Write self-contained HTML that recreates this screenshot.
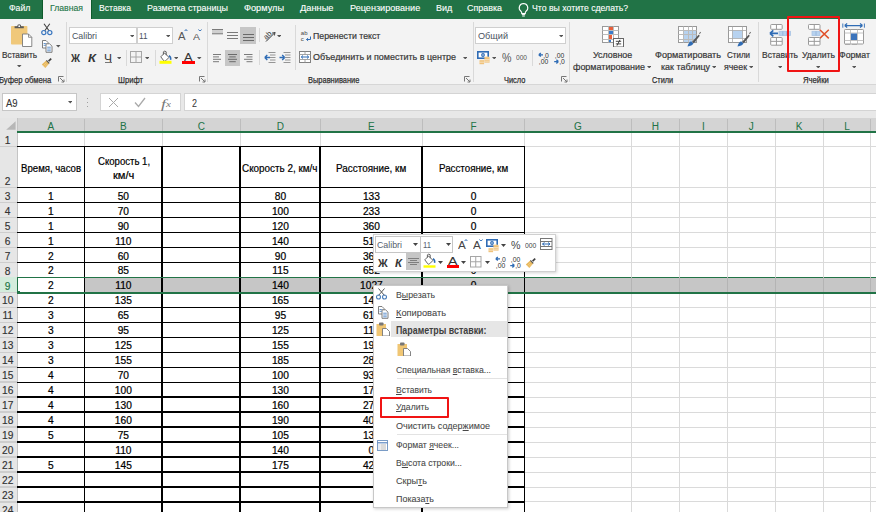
<!DOCTYPE html>
<html><head><meta charset="utf-8"><title>Excel</title>
<style>
html,body{margin:0;padding:0;}
body{width:876px;height:512px;overflow:hidden;position:relative;background:#fff;font-family:"Liberation Sans",sans-serif;}
.a{position:absolute;}
.t{position:absolute;white-space:nowrap;}
</style></head><body>
<div class="a" style="left:0px;top:0px;width:876px;height:19px;background:#217346;"></div>
<div class="a" style="left:42.9px;top:0px;width:48.3px;height:19px;background:#f3f3f3;"></div>
<div class="a" style="left:42.4px;top:0px;width:0.6px;height:18.8px;background:#0e5a2c;"></div>
<div class="a" style="left:91.2px;top:0px;width:0.6px;height:18.8px;background:#0e5a2c;"></div>
<span class="t" id="t1" style="top:4.28px;font-size:9.3px;line-height:9.3px;color:#fff;-webkit-text-stroke:0.12px currentColor;left:8.6px;transform:scaleX(0.9362);transform-origin:0 50%;">Файл</span>
<span class="t" id="t2" style="top:4.28px;font-size:9.3px;line-height:9.3px;color:#fff;-webkit-text-stroke:0.12px currentColor;left:99px;transform:scaleX(0.9259);transform-origin:0 50%;">Вставка</span>
<span class="t" id="t3" style="top:4.28px;font-size:9.3px;line-height:9.3px;color:#fff;-webkit-text-stroke:0.12px currentColor;left:147px;transform:scaleX(0.9604);transform-origin:0 50%;">Разметка страницы</span>
<span class="t" id="t4" style="top:4.28px;font-size:9.3px;line-height:9.3px;color:#fff;-webkit-text-stroke:0.12px currentColor;left:244px;transform:scaleX(0.9884);transform-origin:0 50%;">Формулы</span>
<span class="t" id="t5" style="top:4.28px;font-size:9.3px;line-height:9.3px;color:#fff;-webkit-text-stroke:0.12px currentColor;left:299.5px;transform:scaleX(0.9972);transform-origin:0 50%;">Данные</span>
<span class="t" id="t6" style="top:4.28px;font-size:9.3px;line-height:9.3px;color:#fff;-webkit-text-stroke:0.12px currentColor;left:349.5px;transform:scaleX(0.9778);transform-origin:0 50%;">Рецензирование</span>
<span class="t" id="t7" style="top:4.28px;font-size:9.3px;line-height:9.3px;color:#fff;-webkit-text-stroke:0.12px currentColor;left:435.8px;transform:scaleX(0.9627);transform-origin:0 50%;">Вид</span>
<span class="t" id="t8" style="top:4.28px;font-size:9.3px;line-height:9.3px;color:#fff;-webkit-text-stroke:0.12px currentColor;left:467px;transform:scaleX(0.9593);transform-origin:0 50%;">Справка</span>
<span class="t" id="t9" style="top:4.28px;font-size:9.3px;line-height:9.3px;color:#fff;-webkit-text-stroke:0.12px currentColor;left:531.5px;transform:scaleX(0.9360);transform-origin:0 50%;">Что вы хотите сделать?</span>
<span class="t" id="t10" style="top:4.28px;font-size:9.3px;line-height:9.3px;color:#217346;-webkit-text-stroke:0.12px currentColor;left:50px;transform:scaleX(0.9325);transform-origin:0 50%;">Главная</span>
<svg class="a" style="left:517px;top:2px;width:13px;height:15px;" width="13" height="15" viewBox="0 0 13 15"><path d="M6.5 1.5a4.3 4.3 0 0 0-2.6 7.7c.5.4.8 1 .8 1.6v.7h3.6v-.7c0-.6.3-1.2.8-1.6A4.3 4.3 0 0 0 6.5 1.5z" fill="none" stroke="#fff" stroke-width="1.1"/><path d="M4.8 12.6h3.4M5.2 14h2.6" stroke="#fff" stroke-width="1"/></svg>
<div class="a" style="left:0px;top:19px;width:876px;height:65px;background:#f3f3f3;"></div>
<div class="a" style="left:0px;top:84px;width:876px;height:1px;background:#d6d6d6;"></div>
<div class="a" style="left:66px;top:22px;width:1px;height:60px;background:#d9d9d9;"></div>
<div class="a" style="left:206.5px;top:22px;width:1px;height:60px;background:#d9d9d9;"></div>
<div class="a" style="left:472.8px;top:22px;width:1px;height:60px;background:#d9d9d9;"></div>
<div class="a" style="left:568.8px;top:22px;width:1px;height:60px;background:#d9d9d9;"></div>
<div class="a" style="left:757.5px;top:22px;width:1px;height:60px;background:#d9d9d9;"></div>
<span class="t" id="t11" style="top:75.9px;font-size:9px;line-height:9px;color:#2e2e2e;-webkit-text-stroke:0.25px currentColor;left:-1.2px;transform:scaleX(0.8536);transform-origin:0 50%;">Буфер обмена</span>
<span class="t" id="t12" style="top:75.9px;font-size:9px;line-height:9px;color:#2e2e2e;-webkit-text-stroke:0.25px currentColor;left:118px;transform:scaleX(0.8439);transform-origin:0 50%;">Шрифт</span>
<span class="t" id="t13" style="top:75.9px;font-size:9px;line-height:9px;color:#2e2e2e;-webkit-text-stroke:0.25px currentColor;left:307.6px;transform:scaleX(0.8297);transform-origin:0 50%;">Выравнивание</span>
<span class="t" id="t14" style="top:75.9px;font-size:9px;line-height:9px;color:#2e2e2e;-webkit-text-stroke:0.25px currentColor;left:503.6px;transform:scaleX(0.8266);transform-origin:0 50%;">Число</span>
<span class="t" id="t15" style="top:75.9px;font-size:9px;line-height:9px;color:#2e2e2e;-webkit-text-stroke:0.25px currentColor;left:652.4px;transform:scaleX(0.8135);transform-origin:0 50%;">Стили</span>
<span class="t" id="t16" style="top:75.9px;font-size:9px;line-height:9px;color:#2e2e2e;-webkit-text-stroke:0.25px currentColor;left:803px;transform:scaleX(0.8547);transform-origin:0 50%;">Ячейки</span>
<svg class="a" style="left:58px;top:76px;width:7px;height:7px;" width="7" height="7" viewBox="0 0 7 7"><path d="M0.5 0.5h5M0.5 0.5v5" stroke="#777" stroke-width="1" fill="none"/><path d="M2 2l4 4M6 3.5V6H3.5" stroke="#777" stroke-width="1" fill="none"/></svg>
<svg class="a" style="left:199px;top:76px;width:7px;height:7px;" width="7" height="7" viewBox="0 0 7 7"><path d="M0.5 0.5h5M0.5 0.5v5" stroke="#777" stroke-width="1" fill="none"/><path d="M2 2l4 4M6 3.5V6H3.5" stroke="#777" stroke-width="1" fill="none"/></svg>
<svg class="a" style="left:464px;top:76px;width:7px;height:7px;" width="7" height="7" viewBox="0 0 7 7"><path d="M0.5 0.5h5M0.5 0.5v5" stroke="#777" stroke-width="1" fill="none"/><path d="M2 2l4 4M6 3.5V6H3.5" stroke="#777" stroke-width="1" fill="none"/></svg>
<svg class="a" style="left:561px;top:76px;width:7px;height:7px;" width="7" height="7" viewBox="0 0 7 7"><path d="M0.5 0.5h5M0.5 0.5v5" stroke="#777" stroke-width="1" fill="none"/><path d="M2 2l4 4M6 3.5V6H3.5" stroke="#777" stroke-width="1" fill="none"/></svg>
<svg class="a" style="left:10px;top:23px;width:23px;height:25px;" width="23" height="25" viewBox="0 0 23 25"><rect x="1" y="3" width="16.4" height="18.6" rx="0.8" fill="#f0c87a"/><path d="M4.6 5.2V3.2h2.6a2 2 0 0 1 4 0h2.6v2z" fill="#595959"/><circle cx="9.2" cy="3.2" r="0.9" fill="#fff"/><path d="M12.5 11h6l3.3 3.3v9.2h-9.3z" fill="#fff" stroke="#7a7a7a" stroke-width="0.9"/><path d="M18.5 11v3.3h3.3" fill="none" stroke="#7a7a7a" stroke-width="0.8"/></svg>
<span class="t" id="t17" style="top:51.32px;font-size:9.2px;line-height:9.2px;color:#363636;-webkit-text-stroke:0.2px currentColor;left:1.7px;transform:scaleX(0.8985);transform-origin:0 50%;">Вставить</span>
<svg class="a" style="left:17.25px;top:64.8px;width:4.5px;height:2.5px;" width="4.5" height="2.5" viewBox="0 0 4.5 2.5"><path d="M0 0h4.5L2.25 2.5z" fill="#555"/></svg>
<svg class="a" style="left:40px;top:23px;width:14px;height:13px;" width="14" height="13" viewBox="0 0 14 13"><path d="M4 0.8l5.2 7.2M9.8 0.8L4.6 8" stroke="#404040" stroke-width="1.1"/><circle cx="3.8" cy="9.6" r="2.1" fill="none" stroke="#3a77c0" stroke-width="1.2"/><circle cx="9.8" cy="9.6" r="2.1" fill="none" stroke="#3a77c0" stroke-width="1.2"/></svg>
<svg class="a" style="left:41px;top:39px;width:12px;height:14px;" width="12" height="14" viewBox="0 0 12 14"><path d="M1.5 1.5h3.5l2 2v5.5H1.5z" fill="#fff" stroke="#707070" stroke-width="0.9"/><path d="M5 4.8h3.6l2.4 2.4v6.1H5z" fill="#fff" stroke="#707070" stroke-width="0.9"/><path d="M2.6 4.5h2.2M2.6 6.3h2.2M6.2 8.2h3.6M6.2 10h3.6M6.2 11.8h3.6" stroke="#3a77c0" stroke-width="0.8"/></svg>
<svg class="a" style="left:56.25px;top:45.3px;width:4.5px;height:2.5px;" width="4.5" height="2.5" viewBox="0 0 4.5 2.5"><path d="M0 0h4.5L2.25 2.5z" fill="#555"/></svg>
<svg class="a" style="left:41px;top:57px;width:12px;height:11px;" width="12" height="11" viewBox="0 0 12 11"><path d="M0.8 7.4l4.4-3.9 3 3-3.9 4.4z" fill="#e8b85c"/><path d="M2.4 8.6l3.2-3M3.8 9.6l2.6-2.6" stroke="#f6dca8" stroke-width="0.5"/><path d="M5.4 3.4l2.9 2.9" stroke="#555" stroke-width="1.2"/><path d="M7 3.6l2.6-2.6 1.2 1.2-2.6 2.6z" fill="#404040"/></svg>
<div class="a" style="left:69px;top:27px;width:67.5px;height:16.8px;background:#fff;box-sizing:border-box;border:1px solid #cfcfcf;"></div>
<span class="t" id="t18" style="top:30.96px;font-size:9.6px;line-height:9.6px;color:#4a5260;left:71.5px;transform:scaleX(0.9190);transform-origin:0 50%;">Calibri</span>
<svg class="a" style="left:129.75px;top:34.8px;width:4.5px;height:2.5px;" width="4.5" height="2.5" viewBox="0 0 4.5 2.5"><path d="M0 0h4.5L2.25 2.5z" fill="#555"/></svg>
<div class="a" style="left:136.5px;top:27px;width:36px;height:16.8px;background:#fff;box-sizing:border-box;border:1px solid #cfcfcf;"></div>
<span class="t" id="t19" style="top:30.96px;font-size:9.6px;line-height:9.6px;color:#4a5260;left:139px;transform:scaleX(0.8527);transform-origin:0 50%;">11</span>
<svg class="a" style="left:165.75px;top:34.8px;width:4.5px;height:2.5px;" width="4.5" height="2.5" viewBox="0 0 4.5 2.5"><path d="M0 0h4.5L2.25 2.5z" fill="#555"/></svg>
<span class="t" id="t20" style="top:32px;font-size:10px;line-height:10px;color:#555;left:177.5px;transform:scaleX(1.1241);transform-origin:0 50%;">A</span>
<svg class="a" style="left:183.5px;top:28.5px;width:4px;height:2.5px;" width="4" height="2.5" viewBox="0 0 4 2.5"><path d="M0.5 2.2L2 0.5 3.5 2.2" stroke="#2f6cb5" stroke-width="1" fill="none"/></svg>
<span class="t" id="t21" style="top:32.9px;font-size:9px;line-height:9px;color:#555;left:192.5px;transform:scaleX(1.1636);transform-origin:0 50%;">A</span>
<svg class="a" style="left:197.5px;top:28.5px;width:4px;height:2.5px;" width="4" height="2.5" viewBox="0 0 4 2.5"><path d="M0.5 0.5L2 2.2 3.5 0.5" stroke="#2f6cb5" stroke-width="1" fill="none"/></svg>
<span class="t" id="t22" style="top:53.1px;font-size:11px;line-height:11px;color:#363636;font-weight:700;left:71px;transform:scaleX(0.9042);transform-origin:0 50%;">Ж</span>
<span class="t" id="t23" style="top:53.1px;font-size:11px;line-height:11px;color:#363636;font-weight:700;left:88px;transform:scaleX(1.1824);transform-origin:0 50%;font-style:italic;">К</span>
<span class="t" id="t24" style="top:53.3px;font-size:10.5px;line-height:10.5px;color:#363636;left:104px;transform:scaleX(1.1429);transform-origin:0 50%;">Ч</span>
<div class="a" style="left:104.5px;top:62px;width:7px;height:1px;background:#777;"></div>
<svg class="a" style="left:116.75px;top:56.8px;width:4.5px;height:2.5px;" width="4.5" height="2.5" viewBox="0 0 4.5 2.5"><path d="M0 0h4.5L2.25 2.5z" fill="#555"/></svg>
<div class="a" style="left:126px;top:50px;width:1px;height:16px;background:#d9d9d9;"></div>
<svg class="a" style="left:130px;top:51px;width:12px;height:12px;" width="12" height="12" viewBox="0 0 12 12"><rect x="0.5" y="0.5" width="11" height="11" fill="none" stroke="#a6a6a6"/><path d="M6 0.5v11M0.5 6h11" stroke="#a6a6a6"/></svg>
<svg class="a" style="left:144.75px;top:56.8px;width:4.5px;height:2.5px;" width="4.5" height="2.5" viewBox="0 0 4.5 2.5"><path d="M0 0h4.5L2.25 2.5z" fill="#555"/></svg>
<div class="a" style="left:155px;top:50px;width:1px;height:16px;background:#d9d9d9;"></div>
<svg class="a" style="left:158.5px;top:49.5px;width:14px;height:15px;" width="14" height="15" viewBox="0 0 14 15"><path d="M1.8 6.8L5.6 3l4.4 4.4-3.4 3.4q-0.9 0.9-1.8 0z" fill="#fff" stroke="#555" stroke-width="0.9"/><path d="M4.4 4.4V1.8q1.4-1.4 2.8 0v3.4" fill="none" stroke="#555" stroke-width="0.9"/><path d="M10 5.6q2.2 1.4 1.6 4.2" stroke="#2f6cb5" stroke-width="1.5" fill="none"/><rect x="0.5" y="10.8" width="12" height="3" fill="#ffff00"/></svg>
<svg class="a" style="left:173.75px;top:56.8px;width:4.5px;height:2.5px;" width="4.5" height="2.5" viewBox="0 0 4.5 2.5"><path d="M0 0h4.5L2.25 2.5z" fill="#555"/></svg>
<span class="t" id="t25" style="top:51.6px;font-size:10.5px;line-height:10.5px;color:#333;left:184px;transform:scaleX(1.2116);transform-origin:0 50%;">A</span>
<div class="a" style="left:182px;top:60.5px;width:12.5px;height:3px;background:#ff0000;"></div>
<svg class="a" style="left:197.25px;top:56.8px;width:4.5px;height:2.5px;" width="4.5" height="2.5" viewBox="0 0 4.5 2.5"><path d="M0 0h4.5L2.25 2.5z" fill="#555"/></svg>
<svg class="a" style="left:211.5px;top:29px;width:11px;height:6px;" width="11" height="6" viewBox="0 0 11 6"><rect x="0" y="0.5" width="11" height="4.5" fill="#d0d0d0"/><rect x="0" y="0" width="11" height="1" fill="#7a7a7a"/><rect x="0" y="4.3" width="11" height="1" fill="#7a7a7a"/></svg>
<svg class="a" style="left:227px;top:31.8px;width:11px;height:10px;" width="11" height="10" viewBox="0 0 11 10"><rect x="0" y="0" width="11" height="1" fill="#7a7a7a"/><rect x="0" y="3" width="11" height="1" fill="#7a7a7a"/><rect x="0" y="6" width="11" height="1" fill="#7a7a7a"/></svg>
<div class="a" style="left:240.4px;top:27.3px;width:15.8px;height:16.5px;background:#c6c6c6;"></div>
<svg class="a" style="left:243px;top:33.5px;width:11px;height:10px;" width="11" height="10" viewBox="0 0 11 10"><rect x="0" y="0" width="11" height="1" fill="#6a6a6a"/><rect x="0" y="3" width="11" height="1" fill="#6a6a6a"/><rect x="0" y="6" width="11" height="1" fill="#6a6a6a"/></svg>
<svg class="a" style="left:262px;top:29px;width:14px;height:13px;" width="14" height="13" viewBox="0 0 14 13"><text x="1" y="9" font-size="7.5" font-family="Liberation Sans" fill="#333" transform="rotate(-45 5 6)">ab</text><path d="M4 12.5l9-9" stroke="#333" stroke-width="1"/><path d="M13 3.5l-3 0.6M13 3.5l-0.6 3" stroke="#333" stroke-width="0.9"/></svg>
<svg class="a" style="left:276.75px;top:34.8px;width:4.5px;height:2.5px;" width="4.5" height="2.5" viewBox="0 0 4.5 2.5"><path d="M0 0h4.5L2.25 2.5z" fill="#555"/></svg>
<svg class="a" style="left:212.7px;top:53.8px;width:8.5px;height:10.6px;" width="8.5" height="10.6" viewBox="0 0 8.5 10.6"><rect x="0" y="0" width="8.5" height="1" fill="#7a7a7a"/><rect x="0" y="2.4" width="6" height="1" fill="#7a7a7a"/><rect x="0" y="4.8" width="8.5" height="1" fill="#7a7a7a"/><rect x="0" y="7.2" width="6" height="1" fill="#7a7a7a"/></svg>
<div class="a" style="left:225px;top:49.5px;width:15.2px;height:16.2px;background:#c6c6c6;"></div>
<svg class="a" style="left:228px;top:53.8px;width:9px;height:10.6px;" width="9" height="10.6" viewBox="0 0 9 10.6"><rect x="0" y="0" width="9" height="1" fill="#6a6a6a"/><rect x="1.25" y="2.4" width="6.5" height="1" fill="#6a6a6a"/><rect x="0" y="4.8" width="9" height="1" fill="#6a6a6a"/><rect x="1.25" y="7.2" width="6.5" height="1" fill="#6a6a6a"/></svg>
<svg class="a" style="left:244px;top:53.8px;width:8.5px;height:10.6px;" width="8.5" height="10.6" viewBox="0 0 8.5 10.6"><rect x="0" y="0" width="8.5" height="1" fill="#7a7a7a"/><rect x="2.5" y="2.4" width="6" height="1" fill="#7a7a7a"/><rect x="0" y="4.8" width="8.5" height="1" fill="#7a7a7a"/><rect x="2.5" y="7.2" width="6" height="1" fill="#7a7a7a"/></svg>
<div class="a" style="left:258.6px;top:50px;width:1px;height:15px;background:#d9d9d9;"></div>
<div class="a" style="left:258.6px;top:28px;width:1px;height:14px;background:#d9d9d9;"></div>
<svg class="a" style="left:263.5px;top:51.5px;width:12px;height:12px;" width="12" height="12" viewBox="0 0 12 12"><path d="M4.5 0.5h7M6 3h5.5M6 5.5h5.5M6 8h5.5M4.5 10.5h7" stroke="#8a8a8a" stroke-width="0.9"/><path d="M0.8 5.5h5.2M0.8 5.5l2.5-2.5M0.8 5.5l2.5 2.5" stroke="#2f6cb5" stroke-width="1.4" fill="none"/></svg>
<svg class="a" style="left:279px;top:51.5px;width:12px;height:12px;" width="12" height="12" viewBox="0 0 12 12"><path d="M4.5 0.5h7M6 3h5.5M6 5.5h5.5M6 8h5.5M4.5 10.5h7" stroke="#8a8a8a" stroke-width="0.9"/><path d="M0.5 5.5h5.2M5.7 5.5l-2.5-2.5M5.7 5.5l-2.5 2.5" stroke="#2f6cb5" stroke-width="1.4" fill="none"/></svg>
<div class="a" style="left:295px;top:25px;width:1px;height:45px;background:#d9d9d9;"></div>
<svg class="a" style="left:299.5px;top:30px;width:13px;height:12px;" width="13" height="12" viewBox="0 0 13 12"><text x="0.8" y="5.4" font-size="6" font-family="Liberation Sans" fill="#444">ab</text><text x="0.8" y="10.6" font-size="6" font-family="Liberation Sans" fill="#444">c</text><path d="M10.5 6.5v3H6.5M6.5 9.5l1.6-1.3M6.5 9.5l1.6 1.3" stroke="#2f6cb5" stroke-width="1" fill="none"/></svg>
<span class="t" id="t26" style="top:31.82px;font-size:9.2px;line-height:9.2px;color:#363636;-webkit-text-stroke:0.2px currentColor;left:313.4px;transform:scaleX(0.9512);transform-origin:0 50%;">Перенести текст</span>
<svg class="a" style="left:299px;top:51px;width:12px;height:12px;" width="12" height="12" viewBox="0 0 12 12"><rect x="0.5" y="0.5" width="11" height="11" fill="#fff" stroke="#808080"/><path d="M0.5 3.5h11M0.5 8.5h11M6 0.5v3M6 8.5v3" stroke="#9a9a9a" stroke-width="0.9"/><rect x="1" y="4" width="10" height="4" fill="#fff"/><path d="M2.3 6h7.4M2.3 6l1.7-1.5M2.3 6l1.7 1.5M9.7 6l-1.7-1.5M9.7 6l-1.7 1.5" stroke="#2f6cb5" stroke-width="1" fill="none"/></svg>
<span class="t" id="t27" style="top:53.32px;font-size:9.2px;line-height:9.2px;color:#363636;-webkit-text-stroke:0.2px currentColor;left:313.4px;transform:scaleX(0.9735);transform-origin:0 50%;">Объединить и поместить в центре</span>
<svg class="a" style="left:462.75px;top:56.8px;width:4.5px;height:2.5px;" width="4.5" height="2.5" viewBox="0 0 4.5 2.5"><path d="M0 0h4.5L2.25 2.5z" fill="#555"/></svg>
<div class="a" style="left:475.3px;top:27px;width:91px;height:16.8px;background:#fff;box-sizing:border-box;border:1px solid #cfcfcf;"></div>
<span class="t" id="t28" style="top:30.96px;font-size:9.6px;line-height:9.6px;color:#4a5260;left:477.5px;transform:scaleX(0.9500);transform-origin:0 50%;">Общий</span>
<svg class="a" style="left:558.75px;top:34.8px;width:4.5px;height:2.5px;" width="4.5" height="2.5" viewBox="0 0 4.5 2.5"><path d="M0 0h4.5L2.25 2.5z" fill="#555"/></svg>
<svg class="a" style="left:476.5px;top:51px;width:14px;height:14px;" width="14" height="14" viewBox="0 0 14 14"><rect x="0.8" y="0.8" width="10.4" height="6.4" fill="#fff" stroke="#2f6cb5" stroke-width="1.6"/><circle cx="6" cy="4" r="1.9" fill="#2f6cb5"/><path d="M5 4h2" stroke="#fff" stroke-width="0.7"/><ellipse cx="10" cy="6.6" rx="2.6" ry="1" fill="#f5cf8f"/><rect x="7.4" y="6.6" width="5.2" height="5" fill="#f0c27a"/><path d="M7.4 8.6h5.2M7.4 10.2h5.2" stroke="#fff" stroke-width="0.5"/><rect x="2.5" y="9.2" width="4.6" height="4" fill="#f0c27a"/><path d="M2.5 11.2h4.6" stroke="#fff" stroke-width="0.5"/></svg>
<svg class="a" style="left:491.75px;top:56.8px;width:4.5px;height:2.5px;" width="4.5" height="2.5" viewBox="0 0 4.5 2.5"><path d="M0 0h4.5L2.25 2.5z" fill="#555"/></svg>
<span class="t" id="t29" style="top:52.4px;font-size:12px;line-height:12px;color:#555;left:502px;transform:scaleX(0.8902);transform-origin:0 50%;">%</span>
<span class="t" id="t30" style="top:54px;font-size:8px;line-height:8px;color:#555;left:516px;transform:scaleX(0.8234);transform-origin:0 50%;">000</span>
<div class="a" style="left:532px;top:50px;width:1px;height:16px;background:#d9d9d9;"></div>
<svg class="a" style="left:537.5px;top:51.5px;width:12px;height:13px;" width="12" height="13" viewBox="0 0 12 13"><path d="M0.8 2.8h4.2M0.8 2.8l2-1.8M0.8 2.8l2 1.8" stroke="#2f6cb5" stroke-width="1.3" fill="none"/><text x="5.2" y="6" font-size="6.8" font-family="Liberation Sans" fill="#333">,0</text><text x="0.8" y="11.6" font-size="6.8" font-family="Liberation Sans" fill="#333">,00</text></svg>
<svg class="a" style="left:553.5px;top:51.5px;width:12px;height:13px;" width="12" height="13" viewBox="0 0 12 13"><text x="0.8" y="6" font-size="6.8" font-family="Liberation Sans" fill="#333">,00</text><path d="M0.2 9.6h4.2M4.4 9.6l-2-1.8M4.4 9.6l-2 1.8" stroke="#2f6cb5" stroke-width="1.3" fill="none"/><text x="5.2" y="11.6" font-size="6.8" font-family="Liberation Sans" fill="#333">,0</text></svg>
<svg class="a" style="left:602px;top:26px;width:23px;height:21px;" width="23" height="21" viewBox="0 0 23 21"><rect x="0.5" y="0.5" width="16" height="16" fill="#fff" stroke="#999"/><rect x="6" y="1" width="5" height="4" fill="#e8603c"/><rect x="6" y="5" width="6" height="4" fill="#3b7ccc"/><rect x="6" y="9" width="4" height="4" fill="#e8603c"/><rect x="6" y="13" width="3" height="3" fill="#3b7ccc"/><path d="M6.5 0.5v16" stroke="#bbb"/><path d="M11.5 0.5v16" stroke="#bbb"/><path d="M0.5 4.5h16" stroke="#bbb"/><path d="M0.5 8.5h16" stroke="#bbb"/><path d="M0.5 13.5h16" stroke="#bbb"/><rect x="11.5" y="12.5" width="10" height="8.5" fill="#fff" stroke="#666"/><path d="M13.8 15.3h5.4M13.8 17.9h5.4M18 13.8l-3 5.8" stroke="#333" stroke-width="0.9"/></svg>
<span class="t" id="t31" style="top:51.32px;font-size:9.2px;line-height:9.2px;color:#363636;-webkit-text-stroke:0.2px currentColor;left:592.8px;transform:scaleX(0.9664);transform-origin:0 50%;">Условное</span>
<span class="t" id="t32" style="top:62.82px;font-size:9.2px;line-height:9.2px;color:#363636;-webkit-text-stroke:0.2px currentColor;left:573px;transform:scaleX(0.9761);transform-origin:0 50%;">форматирование</span>
<svg class="a" style="left:646.75px;top:65.8px;width:4.5px;height:2.5px;" width="4.5" height="2.5" viewBox="0 0 4.5 2.5"><path d="M0 0h4.5L2.25 2.5z" fill="#555"/></svg>
<svg class="a" style="left:678px;top:26px;width:25px;height:21px;" width="25" height="21" viewBox="0 0 25 21"><rect x="0.5" y="0.5" width="18" height="16" fill="#fff" stroke="#999"/><rect x="5" y="5" width="13" height="11" fill="#b7d2ef"/><path d="M5.5 0.5v16" stroke="#bbb"/><path d="M10.5 0.5v16" stroke="#bbb"/><path d="M14.5 0.5v16" stroke="#bbb"/><path d="M0.5 4.5h18" stroke="#bbb"/><path d="M0.5 8.5h18" stroke="#bbb"/><path d="M0.5 13.5h18" stroke="#bbb"/><path d="M9.5 20.5c0.5-2.5 1.8-4.6 3.6-5.2l2.4 2.2c-0.8 1.6-3 2.6-6 3z" fill="#2f6cb5"/><path d="M14.2 15.8l1.6 1.5 6-7.5-1.2-1.1z" fill="#555"/><path d="M20.8 8.6l1.3-2.8 0.9 0.9z" fill="#555"/></svg>
<span class="t" id="t33" style="top:51.32px;font-size:9.2px;line-height:9.2px;color:#363636;-webkit-text-stroke:0.2px currentColor;left:654.5px;transform:scaleX(0.9899);transform-origin:0 50%;">Форматировать</span>
<span class="t" id="t34" style="top:62.82px;font-size:9.2px;line-height:9.2px;color:#363636;-webkit-text-stroke:0.2px currentColor;left:661px;transform:scaleX(0.9736);transform-origin:0 50%;">как таблицу</span>
<svg class="a" style="left:711.75px;top:65.8px;width:4.5px;height:2.5px;" width="4.5" height="2.5" viewBox="0 0 4.5 2.5"><path d="M0 0h4.5L2.25 2.5z" fill="#555"/></svg>
<svg class="a" style="left:728px;top:26px;width:25px;height:21px;" width="25" height="21" viewBox="0 0 25 21"><rect x="0.5" y="0.5" width="18" height="16" fill="#fff" stroke="#999"/><rect x="4.5" y="4.5" width="10" height="8" fill="#b7d2ef"/><path d="M0.5 4.5h18M0.5 12.5h18M4.5 0.5v16M14.5 0.5v16" stroke="#aaa" stroke-width="0.8"/><path d="M9.5 20.5c0.5-2.5 1.8-4.6 3.6-5.2l2.4 2.2c-0.8 1.6-3 2.6-6 3z" fill="#2f6cb5"/><path d="M14.2 15.8l1.6 1.5 6-7.5-1.2-1.1z" fill="#555"/><path d="M20.8 8.6l1.3-2.8 0.9 0.9z" fill="#555"/></svg>
<span class="t" id="t35" style="top:51.32px;font-size:9.2px;line-height:9.2px;color:#363636;-webkit-text-stroke:0.2px currentColor;left:727px;transform:scaleX(0.8689);transform-origin:0 50%;">Стили</span>
<span class="t" id="t36" style="top:62.82px;font-size:9.2px;line-height:9.2px;color:#363636;-webkit-text-stroke:0.2px currentColor;left:724px;transform:scaleX(0.9577);transform-origin:0 50%;">ячеек</span>
<svg class="a" style="left:748.75px;top:65.8px;width:4.5px;height:2.5px;" width="4.5" height="2.5" viewBox="0 0 4.5 2.5"><path d="M0 0h4.5L2.25 2.5z" fill="#555"/></svg>
<svg class="a" style="left:768px;top:22px;width:25px;height:26px;" width="25" height="26" viewBox="0 0 25 26"><rect x="2.7" y="2.5" width="11.5" height="4.8" rx="0.8" fill="#fff" stroke="#9a9a9a"/><path d="M8.45 2.5v4.8" stroke="#9a9a9a"/><rect x="11" y="9.3" width="11.5" height="4.2" fill="#b7d2ef" stroke="#a9c3e3" stroke-width="0.8"/><path d="M14.8 9.3v4.2M18.7 9.3v4.2" stroke="#8fb0d8" stroke-width="0.8"/><path d="M2 11.4h8M2 11.4l3.3-3M2 11.4l3.3 3" stroke="#2f6cb5" stroke-width="1.7" fill="none"/><rect x="2.7" y="15.5" width="11.5" height="7.7" rx="0.8" fill="#fff" stroke="#9a9a9a"/><path d="M8.45 15.5v7.7M2.7 19.35h11.5" stroke="#9a9a9a"/></svg>
<span class="t" id="t37" style="top:51.32px;font-size:9.2px;line-height:9.2px;color:#363636;-webkit-text-stroke:0.2px currentColor;left:762px;transform:scaleX(0.9242);transform-origin:0 50%;">Вставить</span>
<svg class="a" style="left:777.75px;top:65.8px;width:4.5px;height:2.5px;" width="4.5" height="2.5" viewBox="0 0 4.5 2.5"><path d="M0 0h4.5L2.25 2.5z" fill="#555"/></svg>
<svg class="a" style="left:806px;top:22px;width:25px;height:26px;" width="25" height="26" viewBox="0 0 25 26"><rect x="2.5" y="2.5" width="11.5" height="4.8" rx="0.8" fill="#fff" stroke="#9a9a9a"/><path d="M8.25 2.5v4.8" stroke="#9a9a9a"/><rect x="6" y="9.3" width="8" height="4.2" fill="#b7d2ef" stroke="#a9c3e3" stroke-width="0.8"/><path d="M10 9.3v4.2" stroke="#8fb0d8" stroke-width="0.8"/><path d="M13.8 7.8l9 8.6M22.8 7.8l-9 8.6" stroke="#e0502a" stroke-width="1.5"/><rect x="2.5" y="15.5" width="11.5" height="7.7" rx="0.8" fill="#fff" stroke="#9a9a9a"/><path d="M8.25 15.5v7.7M2.5 19.35h11.5" stroke="#9a9a9a"/></svg>
<span class="t" id="t38" style="top:51.32px;font-size:9.2px;line-height:9.2px;color:#363636;-webkit-text-stroke:0.2px currentColor;left:801.5px;transform:scaleX(0.9408);transform-origin:0 50%;">Удалить</span>
<svg class="a" style="left:815.75px;top:65.8px;width:4.5px;height:2.5px;" width="4.5" height="2.5" viewBox="0 0 4.5 2.5"><path d="M0 0h4.5L2.25 2.5z" fill="#555"/></svg>
<svg class="a" style="left:842px;top:22px;width:24px;height:26px;" width="24" height="26" viewBox="0 0 24 26"><path d="M2.6 3.6h18M2.6 3.6l2.6-2M2.6 3.6l2.6 2M20.6 3.6l-2.6-2M20.6 3.6l-2.6 2" stroke="#2f6cb5" stroke-width="1.2" fill="none"/><path d="M0.8 1.5v4.2M22.4 1.5v4.2" stroke="#2f6cb5" stroke-width="0.9"/><rect x="2.5" y="7.5" width="19" height="14.5" rx="0.8" fill="#fff" stroke="#9a9a9a"/><path d="M8.5 7.5v14.5M15.5 7.5v14.5M2.5 11h19M2.5 18.5h19" stroke="#b5b5b5" stroke-width="0.8"/><rect x="9" y="11.5" width="6" height="6.5" fill="#3b73bb"/><path d="M3 22.5h5M10 22.5h5" stroke="#aaa" stroke-width="1"/></svg>
<span class="t" id="t39" style="top:51.32px;font-size:9.2px;line-height:9.2px;color:#363636;-webkit-text-stroke:0.2px currentColor;left:839px;transform:scaleX(0.9497);transform-origin:0 50%;">Формат</span>
<svg class="a" style="left:851.75px;top:65.8px;width:4.5px;height:2.5px;" width="4.5" height="2.5" viewBox="0 0 4.5 2.5"><path d="M0 0h4.5L2.25 2.5z" fill="#555"/></svg>
<div class="a" style="left:787.3px;top:16.3px;width:52.7px;height:56px;box-sizing:border-box;border:2.6px solid #f01414;z-index:5;border-radius:1px;"></div>
<div class="a" style="left:0px;top:85px;width:876px;height:33.3px;background:#e8e8e8;"></div>
<div class="a" style="left:1.5px;top:93.3px;width:75px;height:18px;background:#fff;box-sizing:border-box;border:1px solid #c6c6c6;"></div>
<span class="t" id="t40" style="top:98.1px;font-size:10.5px;line-height:10.5px;color:#363636;-webkit-text-stroke:0.1px currentColor;left:5.6px;transform:scaleX(0.9032);transform-origin:0 50%;">A9</span>
<svg class="a" style="left:67.75px;top:101.3px;width:4.5px;height:2.5px;" width="4.5" height="2.5" viewBox="0 0 4.5 2.5"><path d="M0 0h4.5L2.25 2.5z" fill="#555"/></svg>
<div class="a" style="left:87.4px;top:97.5px;width:1.1px;height:1.1px;background:#a0a0a0;"></div>
<div class="a" style="left:87.4px;top:101.5px;width:1.1px;height:1.1px;background:#a0a0a0;"></div>
<div class="a" style="left:87.4px;top:105.5px;width:1.1px;height:1.1px;background:#a0a0a0;"></div>
<div class="a" style="left:99.6px;top:93.2px;width:81px;height:17.8px;background:#fff;box-sizing:border-box;border:1px solid #d4d4d4;"></div>
<svg class="a" style="left:108px;top:97px;width:11px;height:11px;" width="11" height="11" viewBox="0 0 11 11"><path d="M1 1l9 9M10 1L1 10" stroke="#aaa" stroke-width="1"/></svg>
<svg class="a" style="left:134px;top:97px;width:12px;height:11px;" width="12" height="11" viewBox="0 0 12 11"><path d="M1 5.5l3.5 4L11 1" stroke="#aaa" stroke-width="1.3" fill="none"/></svg>
<span class="t" id="t41" style="top:97.7px;font-size:12px;line-height:12px;color:#777;font-family:'Liberation Serif',serif;left:161px;transform:scaleX(1.4953);transform-origin:0 50%;font-style:italic;">f</span>
<span class="t" id="t42" style="top:100.4px;font-size:9px;line-height:9px;color:#777;font-family:'Liberation Serif',serif;left:166px;transform:scaleX(1.2500);transform-origin:0 50%;font-style:italic;">x</span>
<div class="a" style="left:183.6px;top:93.2px;width:700px;height:17.8px;background:#fff;box-sizing:border-box;border:1px solid #d4d4d4;"></div>
<span class="t" id="t43" style="top:98.3px;font-size:10.5px;line-height:10.5px;color:#363636;left:192px;transform:scaleX(0.8556);transform-origin:0 50%;">2</span>
<div class="a" style="left:0px;top:118.3px;width:17px;height:14.7px;background:#e6e6e6;"></div>
<svg class="a" style="left:6px;top:121px;width:10px;height:9px;" width="10" height="9" viewBox="0 0 10 9"><path d="M9.6 0.2V8.8H0.2z" fill="#b7b7b7"/></svg>
<div class="a" style="left:17px;top:118.3px;width:859px;height:12.8px;background:#d4d4d4;"></div>
<div class="a" style="left:84px;top:119px;width:1px;height:12px;background:#bdbdbd;"></div>
<span class="t" id="t44" style="top:121.6px;font-size:10px;line-height:10px;color:#217346;-webkit-text-stroke:0.03px currentColor;left:50.75px;transform:translateX(-50%);">A</span>
<div class="a" style="left:161.7px;top:119px;width:1px;height:12px;background:#bdbdbd;"></div>
<span class="t" id="t45" style="top:121.6px;font-size:10px;line-height:10px;color:#217346;-webkit-text-stroke:0.03px currentColor;left:123.35px;transform:translateX(-50%);">B</span>
<div class="a" style="left:240px;top:119px;width:1px;height:12px;background:#bdbdbd;"></div>
<span class="t" id="t46" style="top:121.6px;font-size:10px;line-height:10px;color:#217346;-webkit-text-stroke:0.03px currentColor;left:201.35px;transform:translateX(-50%);">C</span>
<div class="a" style="left:319.9px;top:119px;width:1px;height:12px;background:#bdbdbd;"></div>
<span class="t" id="t47" style="top:121.6px;font-size:10px;line-height:10px;color:#217346;-webkit-text-stroke:0.03px currentColor;left:280.45px;transform:translateX(-50%);">D</span>
<div class="a" style="left:421.9px;top:119px;width:1px;height:12px;background:#bdbdbd;"></div>
<span class="t" id="t48" style="top:121.6px;font-size:10px;line-height:10px;color:#217346;-webkit-text-stroke:0.03px currentColor;left:371.4px;transform:translateX(-50%);">E</span>
<div class="a" style="left:524.1px;top:119px;width:1px;height:12px;background:#bdbdbd;"></div>
<span class="t" id="t49" style="top:121.6px;font-size:10px;line-height:10px;color:#217346;-webkit-text-stroke:0.03px currentColor;left:473.5px;transform:translateX(-50%);">F</span>
<div class="a" style="left:630.6px;top:119px;width:1px;height:12px;background:#bdbdbd;"></div>
<span class="t" id="t50" style="top:121.6px;font-size:10px;line-height:10px;color:#217346;-webkit-text-stroke:0.03px currentColor;left:577.85px;transform:translateX(-50%);">G</span>
<div class="a" style="left:678.9px;top:119px;width:1px;height:12px;background:#bdbdbd;"></div>
<span class="t" id="t51" style="top:121.6px;font-size:10px;line-height:10px;color:#217346;-webkit-text-stroke:0.03px currentColor;left:655.25px;transform:translateX(-50%);">H</span>
<div class="a" style="left:726.8px;top:119px;width:1px;height:12px;background:#bdbdbd;"></div>
<span class="t" id="t52" style="top:121.6px;font-size:10px;line-height:10px;color:#217346;-webkit-text-stroke:0.03px currentColor;left:703.35px;transform:translateX(-50%);">I</span>
<div class="a" style="left:774.7px;top:119px;width:1px;height:12px;background:#bdbdbd;"></div>
<span class="t" id="t53" style="top:121.6px;font-size:10px;line-height:10px;color:#217346;-webkit-text-stroke:0.03px currentColor;left:751.25px;transform:translateX(-50%);">J</span>
<div class="a" style="left:822.7px;top:119px;width:1px;height:12px;background:#bdbdbd;"></div>
<span class="t" id="t54" style="top:121.6px;font-size:10px;line-height:10px;color:#217346;-webkit-text-stroke:0.03px currentColor;left:799.2px;transform:translateX(-50%);">K</span>
<div class="a" style="left:870.3px;top:119px;width:1px;height:12px;background:#bdbdbd;"></div>
<span class="t" id="t55" style="top:121.6px;font-size:10px;line-height:10px;color:#217346;-webkit-text-stroke:0.03px currentColor;left:847px;transform:translateX(-50%);">L</span>
<div class="a" style="left:918.5px;top:119px;width:1px;height:12px;background:#bdbdbd;"></div>
<span class="t" id="t56" style="top:121.6px;font-size:10px;line-height:10px;color:#217346;-webkit-text-stroke:0.03px currentColor;left:894.9px;transform:translateX(-50%);">M</span>
<div class="a" style="left:16.5px;top:118.3px;width:1px;height:393.7px;background:#c4c4c4;"></div>
<div class="a" style="left:17px;top:131.1px;width:859px;height:1.9px;background:#217346;"></div>
<div class="a" style="left:0px;top:133px;width:16.5px;height:379px;background:#e6e6e6;"></div>
<div class="a" style="left:0px;top:145.85px;width:16.5px;height:1.5px;background:#cdcdcd;"></div>
<div class="a" style="left:0px;top:186.85px;width:16.5px;height:1.5px;background:#cdcdcd;"></div>
<div class="a" style="left:0px;top:201.82px;width:16.5px;height:1.5px;background:#cdcdcd;"></div>
<div class="a" style="left:0px;top:216.79px;width:16.5px;height:1.5px;background:#cdcdcd;"></div>
<div class="a" style="left:0px;top:231.76px;width:16.5px;height:1.5px;background:#cdcdcd;"></div>
<div class="a" style="left:0px;top:246.73px;width:16.5px;height:1.5px;background:#cdcdcd;"></div>
<div class="a" style="left:0px;top:261.7px;width:16.5px;height:1.5px;background:#cdcdcd;"></div>
<div class="a" style="left:0px;top:276.67px;width:16.5px;height:1.5px;background:#cdcdcd;"></div>
<div class="a" style="left:0px;top:291.64px;width:16.5px;height:1.5px;background:#cdcdcd;"></div>
<div class="a" style="left:0px;top:306.61px;width:16.5px;height:1.5px;background:#cdcdcd;"></div>
<div class="a" style="left:0px;top:321.58px;width:16.5px;height:1.5px;background:#cdcdcd;"></div>
<div class="a" style="left:0px;top:336.55px;width:16.5px;height:1.5px;background:#cdcdcd;"></div>
<div class="a" style="left:0px;top:351.52px;width:16.5px;height:1.5px;background:#cdcdcd;"></div>
<div class="a" style="left:0px;top:366.49px;width:16.5px;height:1.5px;background:#cdcdcd;"></div>
<div class="a" style="left:0px;top:381.46px;width:16.5px;height:1.5px;background:#cdcdcd;"></div>
<div class="a" style="left:0px;top:396.43px;width:16.5px;height:1.5px;background:#cdcdcd;"></div>
<div class="a" style="left:0px;top:411.4px;width:16.5px;height:1.5px;background:#cdcdcd;"></div>
<div class="a" style="left:0px;top:426.37px;width:16.5px;height:1.5px;background:#cdcdcd;"></div>
<div class="a" style="left:0px;top:441.34px;width:16.5px;height:1.5px;background:#cdcdcd;"></div>
<div class="a" style="left:0px;top:456.31px;width:16.5px;height:1.5px;background:#cdcdcd;"></div>
<div class="a" style="left:0px;top:471.28px;width:16.5px;height:1.5px;background:#cdcdcd;"></div>
<div class="a" style="left:0px;top:486.25px;width:16.5px;height:1.5px;background:#cdcdcd;"></div>
<div class="a" style="left:0px;top:501.22px;width:16.5px;height:1.5px;background:#cdcdcd;"></div>
<div class="a" style="left:0px;top:516.19px;width:16.5px;height:1.5px;background:#cdcdcd;"></div>
<div class="a" style="left:0px;top:277.42px;width:16.5px;height:14.97px;background:#d3ecdc;"></div>
<span class="t" id="t57" style="top:135.72px;font-size:10.2px;line-height:10.2px;color:#333;-webkit-text-stroke:0.15px currentColor;left:7.7px;transform:translateX(-50%);">1</span>
<span class="t" id="t58" style="top:176.72px;font-size:10.2px;line-height:10.2px;color:#333;-webkit-text-stroke:0.15px currentColor;left:7.7px;transform:translateX(-50%);">2</span>
<span class="t" id="t59" style="top:191.69px;font-size:10.2px;line-height:10.2px;color:#333;-webkit-text-stroke:0.15px currentColor;left:7.7px;transform:translateX(-50%);">3</span>
<span class="t" id="t60" style="top:206.66px;font-size:10.2px;line-height:10.2px;color:#333;-webkit-text-stroke:0.15px currentColor;left:7.7px;transform:translateX(-50%);">4</span>
<span class="t" id="t61" style="top:221.63px;font-size:10.2px;line-height:10.2px;color:#333;-webkit-text-stroke:0.15px currentColor;left:7.7px;transform:translateX(-50%);">5</span>
<span class="t" id="t62" style="top:236.6px;font-size:10.2px;line-height:10.2px;color:#333;-webkit-text-stroke:0.15px currentColor;left:7.7px;transform:translateX(-50%);">6</span>
<span class="t" id="t63" style="top:251.57px;font-size:10.2px;line-height:10.2px;color:#333;-webkit-text-stroke:0.15px currentColor;left:7.7px;transform:translateX(-50%);">7</span>
<span class="t" id="t64" style="top:266.54px;font-size:10.2px;line-height:10.2px;color:#333;-webkit-text-stroke:0.15px currentColor;left:7.7px;transform:translateX(-50%);">8</span>
<span class="t" id="t65" style="top:281.51px;font-size:10.2px;line-height:10.2px;color:#217346;-webkit-text-stroke:0.15px currentColor;left:7.7px;transform:translateX(-50%);">9</span>
<span class="t" id="t66" style="top:296.48px;font-size:10.2px;line-height:10.2px;color:#333;-webkit-text-stroke:0.15px currentColor;left:7.7px;transform:translateX(-50%);">10</span>
<span class="t" id="t67" style="top:311.45px;font-size:10.2px;line-height:10.2px;color:#333;-webkit-text-stroke:0.15px currentColor;left:7.7px;transform:translateX(-50%);">11</span>
<span class="t" id="t68" style="top:326.42px;font-size:10.2px;line-height:10.2px;color:#333;-webkit-text-stroke:0.15px currentColor;left:7.7px;transform:translateX(-50%);">12</span>
<span class="t" id="t69" style="top:341.39px;font-size:10.2px;line-height:10.2px;color:#333;-webkit-text-stroke:0.15px currentColor;left:7.7px;transform:translateX(-50%);">13</span>
<span class="t" id="t70" style="top:356.36px;font-size:10.2px;line-height:10.2px;color:#333;-webkit-text-stroke:0.15px currentColor;left:7.7px;transform:translateX(-50%);">14</span>
<span class="t" id="t71" style="top:371.33px;font-size:10.2px;line-height:10.2px;color:#333;-webkit-text-stroke:0.15px currentColor;left:7.7px;transform:translateX(-50%);">15</span>
<span class="t" id="t72" style="top:386.3px;font-size:10.2px;line-height:10.2px;color:#333;-webkit-text-stroke:0.15px currentColor;left:7.7px;transform:translateX(-50%);">16</span>
<span class="t" id="t73" style="top:401.27px;font-size:10.2px;line-height:10.2px;color:#333;-webkit-text-stroke:0.15px currentColor;left:7.7px;transform:translateX(-50%);">17</span>
<span class="t" id="t74" style="top:416.24px;font-size:10.2px;line-height:10.2px;color:#333;-webkit-text-stroke:0.15px currentColor;left:7.7px;transform:translateX(-50%);">18</span>
<span class="t" id="t75" style="top:431.21px;font-size:10.2px;line-height:10.2px;color:#333;-webkit-text-stroke:0.15px currentColor;left:7.7px;transform:translateX(-50%);">19</span>
<span class="t" id="t76" style="top:446.18px;font-size:10.2px;line-height:10.2px;color:#333;-webkit-text-stroke:0.15px currentColor;left:7.7px;transform:translateX(-50%);">20</span>
<span class="t" id="t77" style="top:461.15px;font-size:10.2px;line-height:10.2px;color:#333;-webkit-text-stroke:0.15px currentColor;left:7.7px;transform:translateX(-50%);">21</span>
<span class="t" id="t78" style="top:476.12px;font-size:10.2px;line-height:10.2px;color:#333;-webkit-text-stroke:0.15px currentColor;left:7.7px;transform:translateX(-50%);">22</span>
<span class="t" id="t79" style="top:491.09px;font-size:10.2px;line-height:10.2px;color:#333;-webkit-text-stroke:0.15px currentColor;left:7.7px;transform:translateX(-50%);">23</span>
<span class="t" id="t80" style="top:506.06px;font-size:10.2px;line-height:10.2px;color:#333;-webkit-text-stroke:0.15px currentColor;left:7.7px;transform:translateX(-50%);">24</span>
<div class="a" style="left:84px;top:133px;width:1px;height:379px;background:#dadada;"></div>
<div class="a" style="left:161.7px;top:133px;width:1px;height:379px;background:#dadada;"></div>
<div class="a" style="left:240px;top:133px;width:1px;height:379px;background:#dadada;"></div>
<div class="a" style="left:319.9px;top:133px;width:1px;height:379px;background:#dadada;"></div>
<div class="a" style="left:421.9px;top:133px;width:1px;height:379px;background:#dadada;"></div>
<div class="a" style="left:524.1px;top:133px;width:1px;height:379px;background:#dadada;"></div>
<div class="a" style="left:630.6px;top:133px;width:1px;height:379px;background:#dadada;"></div>
<div class="a" style="left:678.9px;top:133px;width:1px;height:379px;background:#dadada;"></div>
<div class="a" style="left:726.8px;top:133px;width:1px;height:379px;background:#dadada;"></div>
<div class="a" style="left:774.7px;top:133px;width:1px;height:379px;background:#dadada;"></div>
<div class="a" style="left:822.7px;top:133px;width:1px;height:379px;background:#dadada;"></div>
<div class="a" style="left:870.3px;top:133px;width:1px;height:379px;background:#dadada;"></div>
<div class="a" style="left:17px;top:146.1px;width:859px;height:1px;background:#dadada;"></div>
<div class="a" style="left:17px;top:187.1px;width:859px;height:1px;background:#dadada;"></div>
<div class="a" style="left:17px;top:202.07px;width:859px;height:1px;background:#dadada;"></div>
<div class="a" style="left:17px;top:217.04px;width:859px;height:1px;background:#dadada;"></div>
<div class="a" style="left:17px;top:232.01px;width:859px;height:1px;background:#dadada;"></div>
<div class="a" style="left:17px;top:246.98px;width:859px;height:1px;background:#dadada;"></div>
<div class="a" style="left:17px;top:261.95px;width:859px;height:1px;background:#dadada;"></div>
<div class="a" style="left:17px;top:276.92px;width:859px;height:1px;background:#dadada;"></div>
<div class="a" style="left:17px;top:291.89px;width:859px;height:1px;background:#dadada;"></div>
<div class="a" style="left:17px;top:306.86px;width:859px;height:1px;background:#dadada;"></div>
<div class="a" style="left:17px;top:321.83px;width:859px;height:1px;background:#dadada;"></div>
<div class="a" style="left:17px;top:336.8px;width:859px;height:1px;background:#dadada;"></div>
<div class="a" style="left:17px;top:351.77px;width:859px;height:1px;background:#dadada;"></div>
<div class="a" style="left:17px;top:366.74px;width:859px;height:1px;background:#dadada;"></div>
<div class="a" style="left:17px;top:381.71px;width:859px;height:1px;background:#dadada;"></div>
<div class="a" style="left:17px;top:396.68px;width:859px;height:1px;background:#dadada;"></div>
<div class="a" style="left:17px;top:411.65px;width:859px;height:1px;background:#dadada;"></div>
<div class="a" style="left:17px;top:426.62px;width:859px;height:1px;background:#dadada;"></div>
<div class="a" style="left:17px;top:441.59px;width:859px;height:1px;background:#dadada;"></div>
<div class="a" style="left:17px;top:456.56px;width:859px;height:1px;background:#dadada;"></div>
<div class="a" style="left:17px;top:471.53px;width:859px;height:1px;background:#dadada;"></div>
<div class="a" style="left:17px;top:486.5px;width:859px;height:1px;background:#dadada;"></div>
<div class="a" style="left:17px;top:501.47px;width:859px;height:1px;background:#dadada;"></div>
<div class="a" style="left:17px;top:516.44px;width:859px;height:1px;background:#dadada;"></div>
<div class="a" style="left:84.5px;top:277.42px;width:791.5px;height:14.97px;background:#c6c6c6;"></div>
<div class="a" style="left:17px;top:145.9px;width:508.3px;height:1.4px;background:#000;"></div>
<div class="a" style="left:17px;top:186.9px;width:508.3px;height:1.4px;background:#000;"></div>
<div class="a" style="left:17px;top:201.87px;width:508.3px;height:1.4px;background:#000;"></div>
<div class="a" style="left:17px;top:216.84px;width:508.3px;height:1.4px;background:#000;"></div>
<div class="a" style="left:17px;top:231.81px;width:508.3px;height:1.4px;background:#000;"></div>
<div class="a" style="left:17px;top:246.78px;width:508.3px;height:1.4px;background:#000;"></div>
<div class="a" style="left:17px;top:261.75px;width:508.3px;height:1.4px;background:#000;"></div>
<div class="a" style="left:17px;top:276.72px;width:508.3px;height:1.4px;background:#000;"></div>
<div class="a" style="left:17px;top:291.69px;width:508.3px;height:1.4px;background:#000;"></div>
<div class="a" style="left:17px;top:306.66px;width:508.3px;height:1.4px;background:#000;"></div>
<div class="a" style="left:17px;top:321.63px;width:508.3px;height:1.4px;background:#000;"></div>
<div class="a" style="left:17px;top:336.6px;width:508.3px;height:1.4px;background:#000;"></div>
<div class="a" style="left:17px;top:351.57px;width:508.3px;height:1.4px;background:#000;"></div>
<div class="a" style="left:17px;top:366.54px;width:508.3px;height:1.4px;background:#000;"></div>
<div class="a" style="left:17px;top:381.51px;width:508.3px;height:1.4px;background:#000;"></div>
<div class="a" style="left:17px;top:396.48px;width:508.3px;height:1.4px;background:#000;"></div>
<div class="a" style="left:17px;top:411.45px;width:508.3px;height:1.4px;background:#000;"></div>
<div class="a" style="left:17px;top:426.42px;width:508.3px;height:1.4px;background:#000;"></div>
<div class="a" style="left:17px;top:441.39px;width:508.3px;height:1.4px;background:#000;"></div>
<div class="a" style="left:17px;top:456.36px;width:508.3px;height:1.4px;background:#000;"></div>
<div class="a" style="left:17px;top:471.33px;width:508.3px;height:1.4px;background:#000;"></div>
<div class="a" style="left:17px;top:486.3px;width:508.3px;height:1.4px;background:#000;"></div>
<div class="a" style="left:17px;top:501.27px;width:508.3px;height:1.4px;background:#000;"></div>
<div class="a" style="left:17px;top:516.24px;width:508.3px;height:1.4px;background:#000;"></div>
<div class="a" style="left:83.6px;top:145.9px;width:1.7px;height:366.1px;background:#000;"></div>
<div class="a" style="left:161.15px;top:145.9px;width:1.7px;height:366.1px;background:#000;"></div>
<div class="a" style="left:238.85px;top:145.9px;width:1.7px;height:366.1px;background:#000;"></div>
<div class="a" style="left:319.15px;top:145.9px;width:1.7px;height:366.1px;background:#000;"></div>
<div class="a" style="left:421.15px;top:145.9px;width:1.7px;height:366.1px;background:#000;"></div>
<div class="a" style="left:523.65px;top:145.9px;width:1.7px;height:366.1px;background:#000;"></div>
<div class="a" style="left:17px;top:276.82px;width:859px;height:1.2px;background:#217346;"></div>
<div class="a" style="left:17px;top:291.79px;width:859px;height:2px;background:#217346;"></div>
<div class="a" style="left:630.6px;top:277.42px;width:1px;height:14.97px;background:#b4b4b4;"></div>
<div class="a" style="left:678.9px;top:277.42px;width:1px;height:14.97px;background:#b4b4b4;"></div>
<div class="a" style="left:726.8px;top:277.42px;width:1px;height:14.97px;background:#b4b4b4;"></div>
<div class="a" style="left:774.7px;top:277.42px;width:1px;height:14.97px;background:#b4b4b4;"></div>
<div class="a" style="left:822.7px;top:277.42px;width:1px;height:14.97px;background:#b4b4b4;"></div>
<div class="a" style="left:870.3px;top:277.42px;width:1px;height:14.97px;background:#b4b4b4;"></div>
<div class="a" style="left:16.8px;top:276.82px;width:1.6px;height:16.37px;background:#217346;"></div>
<div class="a" style="left:16.5px;top:290.89px;width:3px;height:3px;background:#217346;"></div>
<span class="t" id="t81" style="top:164.12px;font-size:10.2px;line-height:10.2px;color:#000;-webkit-text-stroke:0.2px currentColor;left:21.2px;transform:scaleX(0.9453);transform-origin:0 50%;">Время, часов</span>
<span class="t" id="t82" style="top:156.72px;font-size:10.2px;line-height:10.2px;color:#000;-webkit-text-stroke:0.2px currentColor;left:97.9px;transform:scaleX(0.9417);transform-origin:0 50%;">Скорость 1,</span>
<span class="t" id="t83" style="top:170.72px;font-size:10.2px;line-height:10.2px;color:#000;-webkit-text-stroke:0.2px currentColor;left:112.6px;transform:scaleX(1.0913);transform-origin:0 50%;">км/ч</span>
<span class="t" id="t84" style="top:163.92px;font-size:10.2px;line-height:10.2px;color:#000;-webkit-text-stroke:0.2px currentColor;left:242px;transform:scaleX(0.9711);transform-origin:0 50%;">Скорость 2, км/ч</span>
<span class="t" id="t85" style="top:163.92px;font-size:10.2px;line-height:10.2px;color:#000;-webkit-text-stroke:0.2px currentColor;left:335.8px;transform:scaleX(0.9729);transform-origin:0 50%;">Расстояние, км</span>
<span class="t" id="t86" style="top:163.92px;font-size:10.2px;line-height:10.2px;color:#000;-webkit-text-stroke:0.2px currentColor;left:438.6px;transform:scaleX(0.9576);transform-origin:0 50%;">Расстояние, км</span>
<span class="t" id="t87" style="top:191.62px;font-size:10.2px;line-height:10.2px;color:#000;-webkit-text-stroke:0.22px currentColor;left:50.75px;transform:translateX(-50%);">1</span>
<span class="t" id="t88" style="top:191.62px;font-size:10.2px;line-height:10.2px;color:#000;-webkit-text-stroke:0.22px currentColor;left:123.35px;transform:translateX(-50%);">50</span>
<span class="t" id="t89" style="top:191.62px;font-size:10.2px;line-height:10.2px;color:#000;-webkit-text-stroke:0.22px currentColor;left:280.45px;transform:translateX(-50%);">80</span>
<span class="t" id="t90" style="top:191.62px;font-size:10.2px;line-height:10.2px;color:#000;-webkit-text-stroke:0.22px currentColor;left:371.4px;transform:translateX(-50%);">133</span>
<span class="t" id="t91" style="top:191.62px;font-size:10.2px;line-height:10.2px;color:#000;-webkit-text-stroke:0.22px currentColor;left:473.5px;transform:translateX(-50%);">0</span>
<span class="t" id="t92" style="top:206.59px;font-size:10.2px;line-height:10.2px;color:#000;-webkit-text-stroke:0.22px currentColor;left:50.75px;transform:translateX(-50%);">1</span>
<span class="t" id="t93" style="top:206.59px;font-size:10.2px;line-height:10.2px;color:#000;-webkit-text-stroke:0.22px currentColor;left:123.35px;transform:translateX(-50%);">70</span>
<span class="t" id="t94" style="top:206.59px;font-size:10.2px;line-height:10.2px;color:#000;-webkit-text-stroke:0.22px currentColor;left:280.45px;transform:translateX(-50%);">100</span>
<span class="t" id="t95" style="top:206.59px;font-size:10.2px;line-height:10.2px;color:#000;-webkit-text-stroke:0.22px currentColor;left:371.4px;transform:translateX(-50%);">233</span>
<span class="t" id="t96" style="top:206.59px;font-size:10.2px;line-height:10.2px;color:#000;-webkit-text-stroke:0.22px currentColor;left:473.5px;transform:translateX(-50%);">0</span>
<span class="t" id="t97" style="top:221.56px;font-size:10.2px;line-height:10.2px;color:#000;-webkit-text-stroke:0.22px currentColor;left:50.75px;transform:translateX(-50%);">1</span>
<span class="t" id="t98" style="top:221.56px;font-size:10.2px;line-height:10.2px;color:#000;-webkit-text-stroke:0.22px currentColor;left:123.35px;transform:translateX(-50%);">90</span>
<span class="t" id="t99" style="top:221.56px;font-size:10.2px;line-height:10.2px;color:#000;-webkit-text-stroke:0.22px currentColor;left:280.45px;transform:translateX(-50%);">120</span>
<span class="t" id="t100" style="top:221.56px;font-size:10.2px;line-height:10.2px;color:#000;-webkit-text-stroke:0.22px currentColor;left:371.4px;transform:translateX(-50%);">360</span>
<span class="t" id="t101" style="top:221.56px;font-size:10.2px;line-height:10.2px;color:#000;-webkit-text-stroke:0.22px currentColor;left:473.5px;transform:translateX(-50%);">0</span>
<span class="t" id="t102" style="top:236.53px;font-size:10.2px;line-height:10.2px;color:#000;-webkit-text-stroke:0.22px currentColor;left:50.75px;transform:translateX(-50%);">1</span>
<span class="t" id="t103" style="top:236.53px;font-size:10.2px;line-height:10.2px;color:#000;-webkit-text-stroke:0.22px currentColor;left:123.35px;transform:translateX(-50%);">110</span>
<span class="t" id="t104" style="top:236.53px;font-size:10.2px;line-height:10.2px;color:#000;-webkit-text-stroke:0.22px currentColor;left:280.45px;transform:translateX(-50%);">140</span>
<span class="t" id="t105" style="top:236.53px;font-size:10.2px;line-height:10.2px;color:#000;-webkit-text-stroke:0.22px currentColor;left:371.4px;transform:translateX(-50%);">513</span>
<span class="t" id="t106" style="top:236.53px;font-size:10.2px;line-height:10.2px;color:#000;-webkit-text-stroke:0.22px currentColor;left:473.5px;transform:translateX(-50%);">0</span>
<span class="t" id="t107" style="top:251.5px;font-size:10.2px;line-height:10.2px;color:#000;-webkit-text-stroke:0.22px currentColor;left:50.75px;transform:translateX(-50%);">2</span>
<span class="t" id="t108" style="top:251.5px;font-size:10.2px;line-height:10.2px;color:#000;-webkit-text-stroke:0.22px currentColor;left:123.35px;transform:translateX(-50%);">60</span>
<span class="t" id="t109" style="top:251.5px;font-size:10.2px;line-height:10.2px;color:#000;-webkit-text-stroke:0.22px currentColor;left:280.45px;transform:translateX(-50%);">90</span>
<span class="t" id="t110" style="top:251.5px;font-size:10.2px;line-height:10.2px;color:#000;-webkit-text-stroke:0.22px currentColor;left:371.4px;transform:translateX(-50%);">363</span>
<span class="t" id="t111" style="top:251.5px;font-size:10.2px;line-height:10.2px;color:#000;-webkit-text-stroke:0.22px currentColor;left:473.5px;transform:translateX(-50%);">0</span>
<span class="t" id="t112" style="top:266.47px;font-size:10.2px;line-height:10.2px;color:#000;-webkit-text-stroke:0.22px currentColor;left:50.75px;transform:translateX(-50%);">2</span>
<span class="t" id="t113" style="top:266.47px;font-size:10.2px;line-height:10.2px;color:#000;-webkit-text-stroke:0.22px currentColor;left:123.35px;transform:translateX(-50%);">85</span>
<span class="t" id="t114" style="top:266.47px;font-size:10.2px;line-height:10.2px;color:#000;-webkit-text-stroke:0.22px currentColor;left:280.45px;transform:translateX(-50%);">115</span>
<span class="t" id="t115" style="top:266.47px;font-size:10.2px;line-height:10.2px;color:#000;-webkit-text-stroke:0.22px currentColor;left:371.4px;transform:translateX(-50%);">652</span>
<span class="t" id="t116" style="top:266.47px;font-size:10.2px;line-height:10.2px;color:#000;-webkit-text-stroke:0.22px currentColor;left:473.5px;transform:translateX(-50%);">0</span>
<span class="t" id="t117" style="top:281.44px;font-size:10.2px;line-height:10.2px;color:#000;-webkit-text-stroke:0.22px currentColor;left:50.75px;transform:translateX(-50%);">2</span>
<span class="t" id="t118" style="top:281.44px;font-size:10.2px;line-height:10.2px;color:#000;-webkit-text-stroke:0.22px currentColor;left:123.35px;transform:translateX(-50%);">110</span>
<span class="t" id="t119" style="top:281.44px;font-size:10.2px;line-height:10.2px;color:#000;-webkit-text-stroke:0.22px currentColor;left:280.45px;transform:translateX(-50%);">140</span>
<span class="t" id="t120" style="top:281.44px;font-size:10.2px;line-height:10.2px;color:#000;-webkit-text-stroke:0.22px currentColor;left:371.4px;transform:translateX(-50%);">1027</span>
<span class="t" id="t121" style="top:281.44px;font-size:10.2px;line-height:10.2px;color:#000;-webkit-text-stroke:0.22px currentColor;left:473.5px;transform:translateX(-50%);">0</span>
<span class="t" id="t122" style="top:296.41px;font-size:10.2px;line-height:10.2px;color:#000;-webkit-text-stroke:0.22px currentColor;left:50.75px;transform:translateX(-50%);">2</span>
<span class="t" id="t123" style="top:296.41px;font-size:10.2px;line-height:10.2px;color:#000;-webkit-text-stroke:0.22px currentColor;left:123.35px;transform:translateX(-50%);">135</span>
<span class="t" id="t124" style="top:296.41px;font-size:10.2px;line-height:10.2px;color:#000;-webkit-text-stroke:0.22px currentColor;left:280.45px;transform:translateX(-50%);">165</span>
<span class="t" id="t125" style="top:296.41px;font-size:10.2px;line-height:10.2px;color:#000;-webkit-text-stroke:0.22px currentColor;left:371.4px;transform:translateX(-50%);">148</span>
<span class="t" id="t126" style="top:296.41px;font-size:10.2px;line-height:10.2px;color:#000;-webkit-text-stroke:0.22px currentColor;left:473.5px;transform:translateX(-50%);">0</span>
<span class="t" id="t127" style="top:311.38px;font-size:10.2px;line-height:10.2px;color:#000;-webkit-text-stroke:0.22px currentColor;left:50.75px;transform:translateX(-50%);">3</span>
<span class="t" id="t128" style="top:311.38px;font-size:10.2px;line-height:10.2px;color:#000;-webkit-text-stroke:0.22px currentColor;left:123.35px;transform:translateX(-50%);">65</span>
<span class="t" id="t129" style="top:311.38px;font-size:10.2px;line-height:10.2px;color:#000;-webkit-text-stroke:0.22px currentColor;left:280.45px;transform:translateX(-50%);">95</span>
<span class="t" id="t130" style="top:311.38px;font-size:10.2px;line-height:10.2px;color:#000;-webkit-text-stroke:0.22px currentColor;left:371.4px;transform:translateX(-50%);">613</span>
<span class="t" id="t131" style="top:311.38px;font-size:10.2px;line-height:10.2px;color:#000;-webkit-text-stroke:0.22px currentColor;left:473.5px;transform:translateX(-50%);">0</span>
<span class="t" id="t132" style="top:326.35px;font-size:10.2px;line-height:10.2px;color:#000;-webkit-text-stroke:0.22px currentColor;left:50.75px;transform:translateX(-50%);">3</span>
<span class="t" id="t133" style="top:326.35px;font-size:10.2px;line-height:10.2px;color:#000;-webkit-text-stroke:0.22px currentColor;left:123.35px;transform:translateX(-50%);">95</span>
<span class="t" id="t134" style="top:326.35px;font-size:10.2px;line-height:10.2px;color:#000;-webkit-text-stroke:0.22px currentColor;left:280.45px;transform:translateX(-50%);">125</span>
<span class="t" id="t135" style="top:326.35px;font-size:10.2px;line-height:10.2px;color:#000;-webkit-text-stroke:0.22px currentColor;left:371.4px;transform:translateX(-50%);">118</span>
<span class="t" id="t136" style="top:326.35px;font-size:10.2px;line-height:10.2px;color:#000;-webkit-text-stroke:0.22px currentColor;left:473.5px;transform:translateX(-50%);">0</span>
<span class="t" id="t137" style="top:341.32px;font-size:10.2px;line-height:10.2px;color:#000;-webkit-text-stroke:0.22px currentColor;left:50.75px;transform:translateX(-50%);">3</span>
<span class="t" id="t138" style="top:341.32px;font-size:10.2px;line-height:10.2px;color:#000;-webkit-text-stroke:0.22px currentColor;left:123.35px;transform:translateX(-50%);">125</span>
<span class="t" id="t139" style="top:341.32px;font-size:10.2px;line-height:10.2px;color:#000;-webkit-text-stroke:0.22px currentColor;left:280.45px;transform:translateX(-50%);">155</span>
<span class="t" id="t140" style="top:341.32px;font-size:10.2px;line-height:10.2px;color:#000;-webkit-text-stroke:0.22px currentColor;left:371.4px;transform:translateX(-50%);">193</span>
<span class="t" id="t141" style="top:341.32px;font-size:10.2px;line-height:10.2px;color:#000;-webkit-text-stroke:0.22px currentColor;left:473.5px;transform:translateX(-50%);">0</span>
<span class="t" id="t142" style="top:356.29px;font-size:10.2px;line-height:10.2px;color:#000;-webkit-text-stroke:0.22px currentColor;left:50.75px;transform:translateX(-50%);">3</span>
<span class="t" id="t143" style="top:356.29px;font-size:10.2px;line-height:10.2px;color:#000;-webkit-text-stroke:0.22px currentColor;left:123.35px;transform:translateX(-50%);">155</span>
<span class="t" id="t144" style="top:356.29px;font-size:10.2px;line-height:10.2px;color:#000;-webkit-text-stroke:0.22px currentColor;left:280.45px;transform:translateX(-50%);">185</span>
<span class="t" id="t145" style="top:356.29px;font-size:10.2px;line-height:10.2px;color:#000;-webkit-text-stroke:0.22px currentColor;left:371.4px;transform:translateX(-50%);">283</span>
<span class="t" id="t146" style="top:356.29px;font-size:10.2px;line-height:10.2px;color:#000;-webkit-text-stroke:0.22px currentColor;left:473.5px;transform:translateX(-50%);">0</span>
<span class="t" id="t147" style="top:371.26px;font-size:10.2px;line-height:10.2px;color:#000;-webkit-text-stroke:0.22px currentColor;left:50.75px;transform:translateX(-50%);">4</span>
<span class="t" id="t148" style="top:371.26px;font-size:10.2px;line-height:10.2px;color:#000;-webkit-text-stroke:0.22px currentColor;left:123.35px;transform:translateX(-50%);">70</span>
<span class="t" id="t149" style="top:371.26px;font-size:10.2px;line-height:10.2px;color:#000;-webkit-text-stroke:0.22px currentColor;left:280.45px;transform:translateX(-50%);">100</span>
<span class="t" id="t150" style="top:371.26px;font-size:10.2px;line-height:10.2px;color:#000;-webkit-text-stroke:0.22px currentColor;left:371.4px;transform:translateX(-50%);">935</span>
<span class="t" id="t151" style="top:371.26px;font-size:10.2px;line-height:10.2px;color:#000;-webkit-text-stroke:0.22px currentColor;left:473.5px;transform:translateX(-50%);">0</span>
<span class="t" id="t152" style="top:386.23px;font-size:10.2px;line-height:10.2px;color:#000;-webkit-text-stroke:0.22px currentColor;left:50.75px;transform:translateX(-50%);">4</span>
<span class="t" id="t153" style="top:386.23px;font-size:10.2px;line-height:10.2px;color:#000;-webkit-text-stroke:0.22px currentColor;left:123.35px;transform:translateX(-50%);">100</span>
<span class="t" id="t154" style="top:386.23px;font-size:10.2px;line-height:10.2px;color:#000;-webkit-text-stroke:0.22px currentColor;left:280.45px;transform:translateX(-50%);">130</span>
<span class="t" id="t155" style="top:386.23px;font-size:10.2px;line-height:10.2px;color:#000;-webkit-text-stroke:0.22px currentColor;left:371.4px;transform:translateX(-50%);">173</span>
<span class="t" id="t156" style="top:386.23px;font-size:10.2px;line-height:10.2px;color:#000;-webkit-text-stroke:0.22px currentColor;left:473.5px;transform:translateX(-50%);">0</span>
<span class="t" id="t157" style="top:401.2px;font-size:10.2px;line-height:10.2px;color:#000;-webkit-text-stroke:0.22px currentColor;left:50.75px;transform:translateX(-50%);">4</span>
<span class="t" id="t158" style="top:401.2px;font-size:10.2px;line-height:10.2px;color:#000;-webkit-text-stroke:0.22px currentColor;left:123.35px;transform:translateX(-50%);">130</span>
<span class="t" id="t159" style="top:401.2px;font-size:10.2px;line-height:10.2px;color:#000;-webkit-text-stroke:0.22px currentColor;left:280.45px;transform:translateX(-50%);">160</span>
<span class="t" id="t160" style="top:401.2px;font-size:10.2px;line-height:10.2px;color:#000;-webkit-text-stroke:0.22px currentColor;left:371.4px;transform:translateX(-50%);">273</span>
<span class="t" id="t161" style="top:401.2px;font-size:10.2px;line-height:10.2px;color:#000;-webkit-text-stroke:0.22px currentColor;left:473.5px;transform:translateX(-50%);">0</span>
<span class="t" id="t162" style="top:416.17px;font-size:10.2px;line-height:10.2px;color:#000;-webkit-text-stroke:0.22px currentColor;left:50.75px;transform:translateX(-50%);">4</span>
<span class="t" id="t163" style="top:416.17px;font-size:10.2px;line-height:10.2px;color:#000;-webkit-text-stroke:0.22px currentColor;left:123.35px;transform:translateX(-50%);">160</span>
<span class="t" id="t164" style="top:416.17px;font-size:10.2px;line-height:10.2px;color:#000;-webkit-text-stroke:0.22px currentColor;left:280.45px;transform:translateX(-50%);">190</span>
<span class="t" id="t165" style="top:416.17px;font-size:10.2px;line-height:10.2px;color:#000;-webkit-text-stroke:0.22px currentColor;left:371.4px;transform:translateX(-50%);">405</span>
<span class="t" id="t166" style="top:416.17px;font-size:10.2px;line-height:10.2px;color:#000;-webkit-text-stroke:0.22px currentColor;left:473.5px;transform:translateX(-50%);">0</span>
<span class="t" id="t167" style="top:431.14px;font-size:10.2px;line-height:10.2px;color:#000;-webkit-text-stroke:0.22px currentColor;left:50.75px;transform:translateX(-50%);">5</span>
<span class="t" id="t168" style="top:431.14px;font-size:10.2px;line-height:10.2px;color:#000;-webkit-text-stroke:0.22px currentColor;left:123.35px;transform:translateX(-50%);">75</span>
<span class="t" id="t169" style="top:431.14px;font-size:10.2px;line-height:10.2px;color:#000;-webkit-text-stroke:0.22px currentColor;left:280.45px;transform:translateX(-50%);">105</span>
<span class="t" id="t170" style="top:431.14px;font-size:10.2px;line-height:10.2px;color:#000;-webkit-text-stroke:0.22px currentColor;left:371.4px;transform:translateX(-50%);">135</span>
<span class="t" id="t171" style="top:431.14px;font-size:10.2px;line-height:10.2px;color:#000;-webkit-text-stroke:0.22px currentColor;left:473.5px;transform:translateX(-50%);">0</span>
<span class="t" id="t172" style="top:446.11px;font-size:10.2px;line-height:10.2px;color:#000;-webkit-text-stroke:0.22px currentColor;left:123.35px;transform:translateX(-50%);">110</span>
<span class="t" id="t173" style="top:446.11px;font-size:10.2px;line-height:10.2px;color:#000;-webkit-text-stroke:0.22px currentColor;left:280.45px;transform:translateX(-50%);">140</span>
<span class="t" id="t174" style="top:446.11px;font-size:10.2px;line-height:10.2px;color:#000;-webkit-text-stroke:0.22px currentColor;left:371.4px;transform:translateX(-50%);">0</span>
<span class="t" id="t175" style="top:446.11px;font-size:10.2px;line-height:10.2px;color:#000;-webkit-text-stroke:0.22px currentColor;left:473.5px;transform:translateX(-50%);">0</span>
<span class="t" id="t176" style="top:461.08px;font-size:10.2px;line-height:10.2px;color:#000;-webkit-text-stroke:0.22px currentColor;left:50.75px;transform:translateX(-50%);">5</span>
<span class="t" id="t177" style="top:461.08px;font-size:10.2px;line-height:10.2px;color:#000;-webkit-text-stroke:0.22px currentColor;left:123.35px;transform:translateX(-50%);">145</span>
<span class="t" id="t178" style="top:461.08px;font-size:10.2px;line-height:10.2px;color:#000;-webkit-text-stroke:0.22px currentColor;left:280.45px;transform:translateX(-50%);">175</span>
<span class="t" id="t179" style="top:461.08px;font-size:10.2px;line-height:10.2px;color:#000;-webkit-text-stroke:0.22px currentColor;left:371.4px;transform:translateX(-50%);">423</span>
<span class="t" id="t180" style="top:461.08px;font-size:10.2px;line-height:10.2px;color:#000;-webkit-text-stroke:0.22px currentColor;left:473.5px;transform:translateX(-50%);">0</span>
<div class="a" style="left:373px;top:234px;width:183.4px;height:38px;background:#fff;box-sizing:border-box;border:1px solid #d0d0d0;box-shadow:1px 1px 3px rgba(0,0,0,0.18);z-index:20"></div>
<div class="a" style="left:375.1px;top:235.7px;width:45.6px;height:17.1px;background:#fff;box-sizing:border-box;border:1px solid #c6c6c6;z-index:20;"></div>
<div class="a" style="left:419.7px;top:235.7px;width:33px;height:17.1px;background:#fff;box-sizing:border-box;border:1px solid #c6c6c6;z-index:20;"></div>
<span class="t" id="t181" style="top:240.06px;font-size:9.6px;line-height:9.6px;color:#55606e;z-index:20;left:377.1px;transform:scaleX(0.9190);transform-origin:0 50%;">Calibri</span>
<span class="t" id="t182" style="top:240.06px;font-size:9.6px;line-height:9.6px;color:#55606e;z-index:20;left:423px;transform:scaleX(0.8025);transform-origin:0 50%;">11</span>
<svg class="a" style="left:412.5px;top:243px;width:5px;height:3px;z-index:20;" width="5" height="3" viewBox="0 0 5 3"><path d="M0 0h5L2.5 3z" fill="#444"/></svg>
<svg class="a" style="left:446px;top:243px;width:5px;height:3px;z-index:20;" width="5" height="3" viewBox="0 0 5 3"><path d="M0 0h5L2.5 3z" fill="#444"/></svg>
<span class="t" id="t183" style="top:240.1px;font-size:11px;line-height:11px;color:#444;z-index:20;left:458.2px;transform:scaleX(1.0621);transform-origin:0 50%;">A</span>
<svg class="a" style="left:464px;top:238.5px;width:4px;height:2.5px;z-index:20;" width="4" height="2.5" viewBox="0 0 4 2.5"><path d="M0.5 2.2L2 0.5 3.5 2.2" stroke="#2f6cb5" stroke-width="1" fill="none"/></svg>
<span class="t" id="t184" style="top:241px;font-size:10px;line-height:10px;color:#444;z-index:20;left:473.2px;transform:scaleX(1.1691);transform-origin:0 50%;">A</span>
<svg class="a" style="left:479px;top:238.5px;width:4px;height:2.5px;z-index:20;" width="4" height="2.5" viewBox="0 0 4 2.5"><path d="M0.5 0.5L2 2.2 3.5 0.5" stroke="#2f6cb5" stroke-width="1" fill="none"/></svg>
<svg class="a" style="left:486px;top:239px;width:14px;height:14px;z-index:20;" width="14" height="14" viewBox="0 0 14 14"><rect x="0.8" y="0.8" width="10.4" height="6.4" fill="#fff" stroke="#2f6cb5" stroke-width="1.6"/><circle cx="6" cy="4" r="1.9" fill="#2f6cb5"/><path d="M5 4h2" stroke="#fff" stroke-width="0.7"/><ellipse cx="10" cy="6.6" rx="2.6" ry="1" fill="#f5cf8f"/><rect x="7.4" y="6.6" width="5.2" height="5" fill="#f0c27a"/><path d="M7.4 8.6h5.2M7.4 10.2h5.2" stroke="#fff" stroke-width="0.5"/><rect x="2.5" y="9.2" width="4.6" height="4" fill="#f0c27a"/><path d="M2.5 11.2h4.6" stroke="#fff" stroke-width="0.5"/></svg>
<svg class="a" style="left:501px;top:243.5px;width:5px;height:3px;z-index:20;" width="5" height="3" viewBox="0 0 5 3"><path d="M0 0h5L2.5 3z" fill="#444"/></svg>
<span class="t" id="t185" style="top:240.1px;font-size:11px;line-height:11px;color:#444;z-index:20;left:510.6px;transform:scaleX(0.9712);transform-origin:0 50%;">%</span>
<span class="t" id="t186" style="top:242.2px;font-size:7px;line-height:7px;color:#444;z-index:20;left:524.9px;transform:scaleX(0.9668);transform-origin:0 50%;">000</span>
<svg class="a" style="left:540px;top:238px;width:13px;height:12px;z-index:20;" width="13" height="12" viewBox="0 0 13 12"><rect x="0.5" y="0.5" width="11.5" height="11" fill="#fff" stroke="#777"/><path d="M0.5 3.5h11.5M0.5 8.5h11.5" stroke="#777"/><path d="M2.5 6h7.5M2.5 6l2-1.5M2.5 6l2 1.5M10 6l-2-1.5M10 6l-2 1.5" stroke="#2f6cb5" fill="none"/></svg>
<span class="t" id="t187" style="top:257.6px;font-size:11px;line-height:11px;color:#363636;font-weight:700;z-index:20;left:377.7px;transform:scaleX(0.9746);transform-origin:0 50%;">Ж</span>
<span class="t" id="t188" style="top:257.6px;font-size:11px;line-height:11px;color:#363636;font-weight:700;z-index:20;left:394.5px;transform:scaleX(1.0346);transform-origin:0 50%;font-style:italic;">К</span>
<div class="a" style="left:406.2px;top:253.4px;width:14.5px;height:16.6px;background:#c6c6c6;z-index:20;"></div>
<svg class="a" style="left:408px;top:258px;width:11px;height:8px;z-index:20;" width="11" height="8" viewBox="0 0 11 8"><path d="M0 0.5h11M2 2.5h7M0 4.5h11M2 6.5h7" stroke="#777" stroke-width="0.9"/></svg>
<svg class="a" style="left:423px;top:253px;width:14px;height:15px;z-index:20;" width="14" height="15" viewBox="0 0 14 15"><path d="M1.8 6.8L5.6 3l4.4 4.4-3.4 3.4q-0.9 0.9-1.8 0z" fill="#fff" stroke="#555" stroke-width="0.9"/><path d="M4.4 4.4V1.8q1.4-1.4 2.8 0v3.4" fill="none" stroke="#555" stroke-width="0.9"/><path d="M10 5.6q2.2 1.4 1.6 4.2" stroke="#2f6cb5" stroke-width="1.5" fill="none"/><rect x="0.5" y="12.3" width="12" height="2.4" fill="#ffff00"/></svg>
<svg class="a" style="left:438px;top:260.5px;width:5px;height:3px;z-index:20;" width="5" height="3" viewBox="0 0 5 3"><path d="M0 0h5L2.5 3z" fill="#444"/></svg>
<span class="t" id="t189" style="top:256.4px;font-size:10.5px;line-height:10.5px;color:#333;z-index:20;left:448px;transform:scaleX(1.3541);transform-origin:0 50%;">A</span>
<div class="a" style="left:446.8px;top:265.4px;width:12px;height:2.6px;background:#ff0000;z-index:20;"></div>
<svg class="a" style="left:461.4px;top:260.5px;width:5px;height:3px;z-index:20;" width="5" height="3" viewBox="0 0 5 3"><path d="M0 0h5L2.5 3z" fill="#444"/></svg>
<svg class="a" style="left:470px;top:255.5px;width:12px;height:12px;z-index:20;" width="12" height="12" viewBox="0 0 12 12"><rect x="0.5" y="0.5" width="10.5" height="10.5" fill="none" stroke="#a6a6a6"/><path d="M5.75 0.5v10.5M0.5 5.75h10.5" stroke="#a6a6a6"/></svg>
<svg class="a" style="left:485px;top:260.5px;width:5px;height:3px;z-index:20;" width="5" height="3" viewBox="0 0 5 3"><path d="M0 0h5L2.5 3z" fill="#444"/></svg>
<svg class="a" style="left:494.5px;top:256px;width:12px;height:13px;z-index:20;" width="12" height="13" viewBox="0 0 12 13"><path d="M0.8 2.8h4.2M0.8 2.8l2-1.8M0.8 2.8l2 1.8" stroke="#2f6cb5" stroke-width="1.3" fill="none"/><text x="5.2" y="6" font-size="6.8" font-family="Liberation Sans" fill="#333">,0</text><text x="0.8" y="11.6" font-size="6.8" font-family="Liberation Sans" fill="#333">,00</text></svg>
<svg class="a" style="left:509.8px;top:256px;width:12px;height:13px;z-index:20;" width="12" height="13" viewBox="0 0 12 13"><text x="0.8" y="6" font-size="6.8" font-family="Liberation Sans" fill="#333">,00</text><path d="M0.2 9.6h4.2M4.4 9.6l-2-1.8M4.4 9.6l-2 1.8" stroke="#2f6cb5" stroke-width="1.3" fill="none"/><text x="5.2" y="11.6" font-size="6.8" font-family="Liberation Sans" fill="#333">,0</text></svg>
<svg class="a" style="left:525px;top:256.5px;width:12px;height:11px;z-index:20;" width="12" height="11" viewBox="0 0 12 11"><path d="M0.8 7.4l4.4-3.9 3 3-3.9 4.4z" fill="#e8b85c"/><path d="M2.4 8.6l3.2-3M3.8 9.6l2.6-2.6" stroke="#f6dca8" stroke-width="0.5"/><path d="M5.4 3.4l2.9 2.9" stroke="#555" stroke-width="1.2"/><path d="M7 3.6l2.6-2.6 1.2 1.2-2.6 2.6z" fill="#404040"/></svg>
<div class="a" style="left:372.6px;top:284.5px;width:135.7px;height:223.3px;background:#fff;box-sizing:border-box;border:1px solid #c8c8c8;box-shadow:1px 1px 3px rgba(0,0,0,0.2);z-index:30"></div>
<div class="a" style="left:391px;top:321.4px;width:116.3px;height:15.6px;background:#e6e6e6;z-index:30;"></div>
<svg class="a" style="left:376px;top:288px;width:11px;height:12px;z-index:30;" width="11" height="12" viewBox="0 0 11 12"><path d="M2.5 0.5l6 7M8.5 0.5l-6 7" stroke="#555" stroke-width="1"/><circle cx="2.5" cy="9" r="2" fill="none" stroke="#4a7ebb" stroke-width="1.1"/><circle cx="8.5" cy="9" r="2" fill="none" stroke="#4a7ebb" stroke-width="1.1"/></svg>
<svg class="a" style="left:376.5px;top:304.5px;width:12px;height:14px;z-index:30;" width="12" height="14" viewBox="0 0 12 14"><path d="M1.5 1.5h3.5l2 2v5.5H1.5z" fill="#fff" stroke="#707070" stroke-width="0.9"/><path d="M5 4.8h3.6l2.4 2.4v6.1H5z" fill="#fff" stroke="#707070" stroke-width="0.9"/><path d="M2.6 4.5h2.2M2.6 6.3h2.2M6.2 8.2h3.6M6.2 10h3.6M6.2 11.8h3.6" stroke="#3a77c0" stroke-width="0.8"/></svg>
<svg class="a" style="left:376px;top:321.5px;width:14px;height:14px;z-index:30;" width="14" height="14" viewBox="0 0 14 14"><rect x="0.5" y="2" width="9.5" height="12" fill="#f0c674"/><rect x="3" y="0.5" width="4.5" height="3" rx="0.8" fill="#777"/><path d="M6.5 6.5h4l3 3v4.5h-7z" fill="#fff" stroke="#777" stroke-width="0.9"/></svg>
<svg class="a" style="left:396.5px;top:342px;width:14px;height:14px;z-index:30;" width="14" height="14" viewBox="0 0 14 14"><rect x="0.5" y="2" width="9.5" height="12" fill="#f0c674"/><rect x="3" y="0.5" width="4.5" height="3" rx="0.8" fill="#777"/><path d="M6.5 6.5h4l3 3v4.5h-7z" fill="#fff" stroke="#777" stroke-width="0.9"/></svg>
<span class="t" id="t190" style="top:289.94px;font-size:9.4px;line-height:9.4px;color:#484848;-webkit-text-stroke:0.08px currentColor;z-index:30;left:395.7px;transform:scaleX(0.9345);transform-origin:0 50%;">В<u>ы</u>резать</span>
<span class="t" id="t191" style="top:307.94px;font-size:9.4px;line-height:9.4px;color:#484848;-webkit-text-stroke:0.08px currentColor;z-index:30;left:395.7px;transform:scaleX(0.9901);transform-origin:0 50%;"><u>К</u>опировать</span>
<span class="t" id="t192" style="top:365.14px;font-size:9.4px;line-height:9.4px;color:#484848;-webkit-text-stroke:0.08px currentColor;z-index:30;left:395.7px;transform:scaleX(0.9258);transform-origin:0 50%;">Специальная <u>в</u>ставка...</span>
<span class="t" id="t193" style="top:384.94px;font-size:9.4px;line-height:9.4px;color:#484848;-webkit-text-stroke:0.08px currentColor;z-index:30;left:395.7px;transform:scaleX(0.9053);transform-origin:0 50%;"><u>В</u>ставить</span>
<span class="t" id="t194" style="top:402.14px;font-size:9.4px;line-height:9.4px;color:#484848;-webkit-text-stroke:0.08px currentColor;z-index:30;left:395.7px;transform:scaleX(0.9215);transform-origin:0 50%;"><u>У</u>далить</span>
<span class="t" id="t195" style="top:420.74px;font-size:9.4px;line-height:9.4px;color:#484848;-webkit-text-stroke:0.08px currentColor;z-index:30;left:395.7px;transform:scaleX(0.9638);transform-origin:0 50%;">Очистить содер<u>ж</u>имое</span>
<span class="t" id="t196" style="top:440.14px;font-size:9.4px;line-height:9.4px;color:#484848;-webkit-text-stroke:0.08px currentColor;z-index:30;left:395.7px;transform:scaleX(0.9233);transform-origin:0 50%;">Формат <u>я</u>чеек...</span>
<span class="t" id="t197" style="top:458.14px;font-size:9.4px;line-height:9.4px;color:#484848;-webkit-text-stroke:0.08px currentColor;z-index:30;left:395.7px;transform:scaleX(0.9245);transform-origin:0 50%;">В<u>ы</u>сота строки...</span>
<span class="t" id="t198" style="top:475.64px;font-size:9.4px;line-height:9.4px;color:#484848;-webkit-text-stroke:0.08px currentColor;z-index:30;left:395.7px;transform:scaleX(0.9683);transform-origin:0 50%;">Скры<u>т</u>ь</span>
<span class="t" id="t199" style="top:494.14px;font-size:9.4px;line-height:9.4px;color:#484848;-webkit-text-stroke:0.08px currentColor;z-index:30;left:395.7px;transform:scaleX(0.9530);transform-origin:0 50%;">Показа<u>т</u>ь</span>
<span class="t" id="t200" style="top:325.7px;font-size:10px;line-height:10px;color:#404040;font-weight:700;z-index:30;left:395.7px;transform:scaleX(0.8862);transform-origin:0 50%;">Параметры вставки:</span>
<div class="a" style="left:397px;top:378px;width:110px;height:1px;background:#e3e3e3;z-index:30;"></div>
<div class="a" style="left:397px;top:434px;width:110px;height:1px;background:#e3e3e3;z-index:30;"></div>
<svg class="a" style="left:376.5px;top:439.5px;width:11px;height:11px;z-index:30;" width="11" height="11" viewBox="0 0 11 11"><rect x="0.5" y="0.5" width="10" height="10" fill="#fff" stroke="#7a9cc6"/><path d="M0.5 2.8h10" stroke="#5b86c0" stroke-width="1.2"/><path d="M3.5 5h5.5M3.5 7h5.5M3.5 9h5.5" stroke="#9a9a9a" stroke-width="0.7"/><path d="M1.5 5h1M1.5 7h1M1.5 9h1" stroke="#5b86c0" stroke-width="0.7"/></svg>
<div class="a" style="left:379.8px;top:397.3px;width:69.4px;height:20.3px;box-sizing:border-box;border:2.6px solid #f01414;z-index:35;border-radius:1px;"></div>
</body></html>
